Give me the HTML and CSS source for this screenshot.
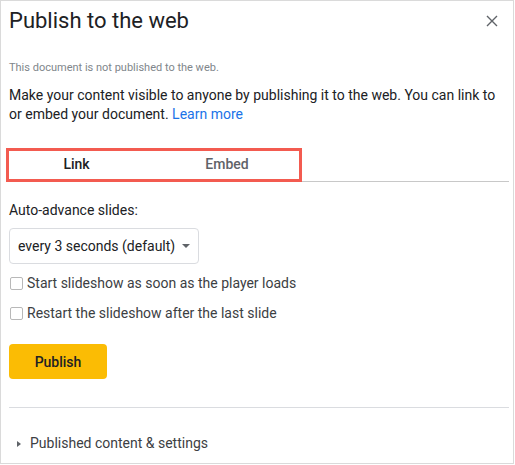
FILE: index.html
```html
<!DOCTYPE html>
<html lang="en">
<head>
    <meta charset="UTF-8">
    <meta name="viewport" content="width=device-width, initial-scale=1.0">
    <title>Publish to the web</title>
    <link rel="stylesheet" href="styles.css">
</head>
<body>

    <div class="dialog">
        <div class="dialog-header">
            <h1 class="dialog-title">Publish to the web</h1>
            <button class="close-btn" aria-label="Close">
                <svg width="12" height="12" viewBox="0 0 12 12">
                    <path d="M1 1L11 11M11 1L1 11" stroke="#5f6368" stroke-width="1.4" fill="none"/>
                </svg>
            </button>
        </div>

        <div class="status">This document is not published to the web.</div>
        <p class="intro">Make your content visible to anyone by publishing it to the web. You can link to or embed your document. <a href="#">Learn more</a></p>

        <div class="tabs">
            <div class="tab tab-link active">Link</div>
            <div class="tab tab-embed">Embed</div>
            <div class="highlight"></div>
        </div>

        <div class="field-label">Auto-advance slides:</div>
        <div class="select">
            <span>every 3 seconds (default)</span>
            <span class="caret"></span>
        </div>

        <label class="check-row">
            <span class="checkbox"></span>
            Start slideshow as soon as the player loads
        </label>
        <label class="check-row">
            <span class="checkbox"></span>
            Restart the slideshow after the last slide
        </label>

        <button class="publish-btn">Publish</button>

        <hr class="divider">

        <div class="settings-toggle">
            <span class="arrow-right"></span>
            Published content &amp; settings
        </div>
    </div>

</body>
</html>
```

FILE: styles.css
```css
body {
    margin: 0;
    font-family: Roboto, "Liberation Sans", Arial, sans-serif;
    background: white;
}
.dialog {
    width: 514px;
    height: 464px;
    box-sizing: border-box;
    border: 1px solid #dadada;
    padding: 0 4px 0 8px;
    color: #202124;
}
.dialog-header {
    display: flex;
    justify-content: space-between;
    align-items: flex-start;
    padding-top: 6px;
}
.dialog-title {
    margin: 0;
    font-size: 22px;
    font-weight: 400;
    line-height: 28px;
}
.close-btn {
    background: none;
    border: none;
    padding: 0;
    margin: 8px 11px 0 0;
    width: 12px;
    height: 12px;
    cursor: pointer;
}
.close-btn svg {
    display: block;
}
.status {
    margin-top: 25px;
    font-size: 11px;
    line-height: 16px;
    color: #80868b;
}
.intro {
    margin: 10px 0 0;
    font-size: 14px;
    line-height: 19px;
    color: #202124;
}
.intro a {
    color: #1a73e8;
    text-decoration: none;
}
.tabs {
    position: relative;
    display: flex;
    margin-top: 24px;
    height: 33px;
    border-bottom: 1px solid #c8c8c8;
}
.tab {
    font-size: 14px;
    font-weight: 500;
    line-height: 33px;
    text-align: center;
    color: #5f6368;
}
.tab-link {
    width: 135px;
}
.tab-embed {
    width: 166px;
}
.tab.active {
    color: #202124;
}
.highlight {
    position: absolute;
    left: -3px;
    top: 0;
    width: 296px;
    height: 34px;
    box-sizing: border-box;
    border: 3px solid #f35b50;
}
.field-label {
    margin-top: 19px;
    font-size: 14px;
    font-weight: 400;
    line-height: 19px;
    color: #202124;
}
.select {
    display: flex;
    align-items: center;
    justify-content: space-between;
    width: 190px;
    height: 36px;
    box-sizing: border-box;
    margin-top: 8px;
    padding: 0 8px;
    border: 1px solid #dadce0;
    border-radius: 4px;
    font-size: 14px;
    line-height: 19px;
}
.caret {
    width: 0;
    height: 0;
    border-left: 4px solid transparent;
    border-right: 4px solid transparent;
    border-top: 4px solid #5f6368;
}
.check-row {
    display: flex;
    align-items: center;
    gap: 4px;
    margin-top: 10px;
    font-size: 14px;
    line-height: 19px;
    color: #3c4043;
}
.check-row + .check-row {
    margin-top: 11px;
}
.checkbox {
    width: 13px;
    height: 13px;
    box-sizing: border-box;
    margin-left: 1px;
    border: 1px solid #b8b8b8;
    border-radius: 2px;
}
.publish-btn {
    display: block;
    margin-top: 21px;
    width: 98px;
    height: 35px;
    background-color: #fbbc04;
    border: none;
    border-radius: 4px;
    font-family: inherit;
    font-size: 14px;
    font-weight: 500;
    color: #202124;
    cursor: pointer;
}
.divider {
    margin: 28px 0 0;
    border: none;
    border-top: 1px solid #dadce0;
}
.settings-toggle {
    display: flex;
    align-items: center;
    margin-top: 26px;
    padding-left: 8px;
    font-size: 14px;
    line-height: 19px;
    color: #3c4043;
}
.arrow-right {
    width: 0;
    height: 0;
    margin-right: 9px;
    border-top: 3.5px solid transparent;
    border-bottom: 3.5px solid transparent;
    border-left: 4px solid #5f6368;
}
```
